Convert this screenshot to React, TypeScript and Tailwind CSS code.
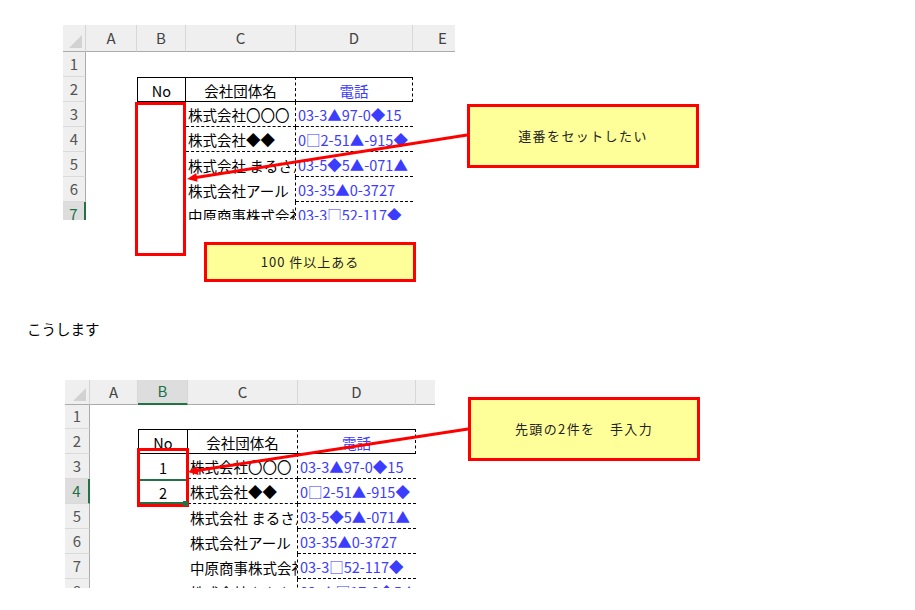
import React from 'react';

type Cell = { text?: string; className?: string };

const companies = ['株式会社〇〇〇', '株式会社◆◆', '株式会社 まるさん', '株式会社アール', '中原商事株式会社', '株式会社△△△'];
const phones = ['03-3▲97-0◆15', '0□2-51▲-915◆', '03-5◆5▲-071▲', '03-35▲0-3727', '03-3□52-117◆', '03-▲□17-0◆5▲'];

const blue = 'text-[#3c3cff]';

function buildRows(nos: string[], selB: number): Cell[][] {
  const rows: Cell[][] = [];
  rows.push([{}, {}, {}, {}, {}]);
  rows.push([
    {},
    { text: 'No', className: 'justify-center border border-black' },
    { text: '会社団体名', className: 'justify-center border-t border-b border-r border-black [border-right-style:dashed]' },
    { text: '電話', className: `justify-center border-t border-b border-r border-black [border-right-style:dashed] ${blue}` },
    {},
  ]);
  companies.forEach((name, i) => {
    const bCls = i === selB ? 'justify-center border-y-2 border-[#217346]' : 'justify-center';
    rows.push([
      {},
      { text: nos[i], className: bCls },
      {
        text: name,
        className: i < 2 ? 'pl-[2px] border-r border-b border-dashed border-black' : 'pl-[2px] border-r border-dashed border-black',
      },
      { text: phones[i], className: `pl-[2px] border-b border-dashed border-black ${blue}` },
      {},
    ]);
  });
  return rows;
}

interface SheetProps {
  cols: string;
  headH: string;
  labels: string[];
  selCol: number;
  selRow: number;
  rows: Cell[][];
  className: string;
}

function Sheet({ cols, headH, labels, selCol, selRow, rows, className }: SheetProps) {
  return (
    <div className={`overflow-hidden bg-white ${className}`}>
      <div className={`grid ${cols} ${headH}`}>
        <div className="relative bg-[#efefef] border-r border-[#d4d4d4] border-b border-b-[#ababab]">
          <svg className="absolute right-[3px] bottom-[3px]" width="13" height="13" viewBox="0 0 13 13">
            <polygon points="13,0 13,13 0,13" fill="#d2d2d2" />
          </svg>
        </div>
        {labels.map((l, i) => (
          <div
            key={i}
            className={`flex items-center justify-center text-[15px] border-r border-[#d7d7d7] ${
              i === selCol
                ? 'bg-[#dddddd] text-[#1e7145] border-b-2 border-b-[#217346]'
                : 'bg-[#efefef] text-[#444] border-b border-b-[#ababab]'
            }`}
          >
            {l}
          </div>
        ))}
      </div>
      {rows.map((row, r) => (
        <div key={r} className={`grid ${cols} h-[25px]`}>
          <div
            className={`flex items-center justify-center text-[15px] border-b border-[#dadada] ${
              r + 1 === selRow
                ? 'bg-[#dddddd] text-[#1e7145] border-r-2 border-r-[#217346]'
                : 'bg-[#efefef] text-[#555] border-r border-r-[#ababab]'
            }`}
          >
            {r + 1}
          </div>
          {row.map((c, i) => (
            <div key={i} className={`flex items-center pt-[2px] overflow-hidden whitespace-nowrap text-[14.5px] ${c.className ?? ''}`}>
              {c.text}
            </div>
          ))}
        </div>
      ))}
    </div>
  );
}

function Callout({ text, className }: { text: string; className: string }) {
  return (
    <div className={`absolute flex items-center justify-center bg-[#ffff99] border-[3px] border-[#ff0000] text-[13px] tracking-[1.4px] text-[#222] ${className}`}>
      {text}
    </div>
  );
}

export default function App() {
  const topRows = buildRows(['', '', '', '', '', ''], -1);
  const bottomRows = buildRows(['1', '2', '', '', '', ''], 1);

  return (
    <div className="relative w-[915px] h-[610px] overflow-hidden bg-white text-black font-['Noto_Sans_CJK_JP','Noto_Sans',sans-serif]">
      <div className="flex flex-col">
        <Sheet
          className="ml-[63px] mt-[25px] w-[392px] h-[195px]"
          cols="grid-cols-[23px_51px_49px_110px_117px_60px]"
          headH="h-[27px]"
          labels={['A', 'B', 'C', 'D', 'E']}
          selCol={-1}
          selRow={7}
          rows={topRows}
        />
        <p className="ml-[27px] mt-[98px] h-[21px] leading-[21px] text-[14.5px]">こうします</p>
        <Sheet
          className="ml-[65px] mt-[41px] w-[370px] h-[208px]"
          cols="grid-cols-[25px_48px_50px_110px_118px_60px]"
          headH="h-[24px]"
          labels={['A', 'B', 'C', 'D', '']}
          selCol={1}
          selRow={4}
          rows={bottomRows}
        />
      </div>

      {/* red frames */}
      <div className="absolute left-[135px] top-[102px] w-[51px] h-[154px] border-[3px] border-[#ff0000]" />
      <div className="absolute left-[137px] top-[448px] w-[52px] h-[59px] border-[3px] border-[#ff0000]" />
      <div className="absolute left-[183px] top-[501px] w-[5px] h-[5px] bg-[#217346]" />

      <Callout text="連番をセットしたい" className="left-[467px] top-[104px] w-[232px] h-[64px]" />
      <Callout text="100 件以上ある" className="left-[204px] top-[242px] w-[212px] h-[40px] tracking-[1px]" />
      <Callout text="先頭の2件を　手入力" className="left-[468px] top-[397px] w-[232px] h-[64px]" />

      <svg className="absolute left-0 top-0 pointer-events-none" width="915" height="610">
        <line x1="467" y1="135" x2="196" y2="177.5" stroke="#ff0000" strokeWidth="3" />
        <polygon points="187,179 196.3,173 197.6,181.8" fill="#ff0000" />
        <line x1="468" y1="429" x2="197" y2="470.6" stroke="#ff0000" strokeWidth="3" />
        <polygon points="188,472 197.3,466.2 198.6,475" fill="#ff0000" />
      </svg>
    </div>
  );
}
